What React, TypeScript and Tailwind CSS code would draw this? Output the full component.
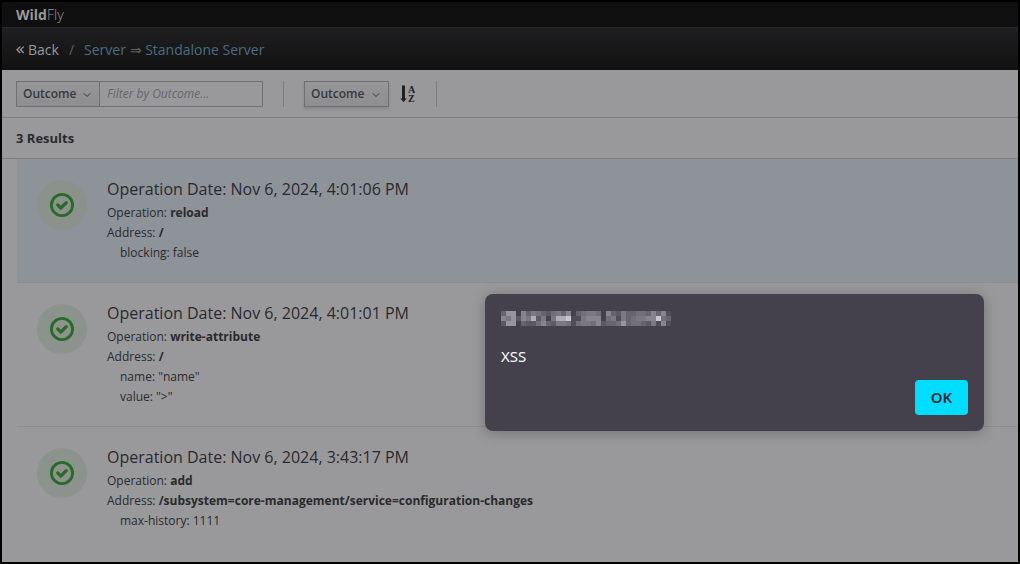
import { ChevronDown } from "lucide-react";

interface IOperation {
  date: string;
  operation: string;
  address: string;
  params: string[];
  selected?: boolean;
}

const operations: IOperation[] = [
  {
    date: "Nov 6, 2024, 4:01:06 PM",
    operation: "reload",
    address: "/",
    params: ["blocking: false"],
    selected: true,
  },
  {
    date: "Nov 6, 2024, 4:01:01 PM",
    operation: "write-attribute",
    address: "/",
    params: ['name: "name"', 'value: ">"'],
  },
  {
    date: "Nov 6, 2024, 3:43:17 PM",
    operation: "add",
    address: "/subsystem=core-management/service=configuration-changes",
    params: ["max-history: 1111"],
  },
];

// brightness of each tile, 0 (background) to 9, row by row
const tiles = [
  "3770635432453603455406325334436361",
  "6572658250588911566604515345566943",
  "2770322463255414554623347344325161",
];

const tileColors = [
  "#44414d", "#4f4d58", "#5b5964", "#66646f", "#71707a",
  "#7a7982", "#86858f", "#96959f", "#aeadb5", "#c8c7cd",
];

const Hidden = () => (
  <svg width="170" height="15" shapeRendering="crispEdges" aria-hidden="true">
    {tiles.map((row, y) =>
      row.split("").map((v, x) => (
        <rect
          key={`${x}-${y}`}
          x={x * 5}
          y={y * 5}
          width="5"
          height="5"
          fill={tileColors[Number(v)]}
        />
      ))
    )}
  </svg>
);

const OkIcon = () => (
  <svg width="24" height="24" viewBox="0 0 24 24" fill="none" stroke="#286a28">
    <circle cx="12" cy="12" r="10.6" strokeWidth="2.8" />
    <path
      d="M7.7 11.9 10.8 15 16.3 9.6"
      strokeWidth="3.2"
      strokeLinecap="round"
      strokeLinejoin="round"
    />
  </svg>
);

const BackIcon = () => (
  <svg width="12" height="14" viewBox="0 0 12 14" fill="none" stroke="currentColor">
    <path d="M4.200 4.600 1 7.800 4.200 11M7.700 4.600 4.500 7.800 7.700 11" strokeWidth="1.3" />
  </svg>
);

const SortIcon = () => (
  <svg width="16" height="20" viewBox="0 0 16 20" fill="#202023">
    <path d="M2 1.500h3v13h1.800L3.500 18 .2 14.500h1.800z" />
    <text x="8" y="9" className="font-['Liberation_Serif',serif] text-[10px] font-bold">
      A
    </text>
    <text x="8" y="18" className="font-['Liberation_Serif',serif] text-[10px] font-bold">
      Z
    </text>
  </svg>
);

const Dropdown = ({ label, className }: { label: string; className: string }) => (
  <div className="relative flex">
    <select
      aria-label={label}
      className={`h-[26px] appearance-none border border-[#707072] bg-linear-to-b from-[#969698] to-[#8e8e90] pl-[6px] text-[12px] font-semibold text-[#38383c] ${className}`}
    >
      <option>Outcome</option>
    </select>
    <ChevronDown
      size={12}
      className="pointer-events-none absolute top-[8px] right-[7px] text-[#38383c]"
    />
  </div>
);

const OperationRow = ({ item }: { item: IOperation }) => (
  <li
    className={`flex gap-5 border-b border-[#8d8d8f] px-5 pt-[21px] pb-[19px] last:border-b-0 ${
      item.selected ? "bg-[#8e9299]" : ""
    }`}
  >
    <div
      className={`flex size-[50px] shrink-0 items-center justify-center rounded-full ${
        item.selected ? "bg-[#8b918b]" : "bg-[#8c928c]"
      }`}
    >
      <OkIcon />
    </div>
    <div className="text-[12px] leading-[20px]">
      <h2 className="pb-[5px] text-[16px] leading-[18px]">
        Operation Date: {item.date}
      </h2>
      <p>
        Operation: <b>{item.operation}</b>
      </p>
      <p>
        Address: <b>{item.address}</b>
      </p>
      <ul className="pl-[13px]">
        {item.params.map((param) => (
          <li key={param}>{param}</li>
        ))}
      </ul>
    </div>
  </li>
);

const App = () => {
  return (
    <div className="relative min-h-screen border-2 border-black bg-[#99999b] font-['Open_Sans',sans-serif] text-[#2a2a2d]">
      <header className="text-[#98989a]">
        <div className="h-[25px] bg-[#0f0f10] px-[14px] text-[14px] leading-[26px]">
          <span className="font-bold">Wild</span>
          <span className="font-light">Fly</span>
        </div>
        <nav className="flex h-[43px] items-center border-t border-[#28282a] bg-linear-to-b from-[#1f1f21] to-[#111112] px-[14px] text-[14px]">
          <a href="#back" className="flex items-center">
            <BackIcon />
            Back
          </a>
          <span className="px-[10px] text-[#606062]">/</span>
          <a href="#server" className="text-[#4b6b80]">
            Server <span className="text-[#606062]">⇒</span> Standalone Server
          </a>
        </nav>
      </header>

      <div className="flex h-[48px] items-center border-b border-[#7e7e80] px-[14px]">
        <div className="flex">
          <Dropdown label="Filter attribute" className="w-[84px]" />
          <input
            type="text"
            aria-label="Filter by Outcome"
            placeholder="Filter by Outcome..."
            className="-ml-px h-[26px] w-[164px] border border-[#707072] px-[7px] text-[12px] placeholder:text-[#66666a] placeholder:italic"
          />
        </div>
        <div className="mx-5 h-[26px] w-px bg-[#7e7e80]" />
        <Dropdown
          label="Sort attribute"
          className="w-[85px] shadow-[0_2px_3px_#00000020]"
        />
        <button type="button" aria-label="Sort ascending" className="ml-[11px]">
          <SortIcon />
        </button>
        <div className="mx-5 h-[26px] w-px bg-[#7e7e80]" />
      </div>

      <h1 className="border-b border-[#7e7e80] px-[14px] text-[13px] leading-[40px] font-bold">
        3 Results
      </h1>

      <ul className="pl-[15px]">
        {operations.map((item) => (
          <OperationRow key={item.date} item={item} />
        ))}
      </ul>

      <div
        role="alertdialog"
        aria-label="XSS"
        className="absolute top-[292px] right-[34px] flex w-[499px] flex-col rounded-lg bg-[#44414d] px-4 pt-[17px] pb-4 font-['Noto_Sans',sans-serif] text-[15px] text-[#fbfbfe] shadow-[0_2px_14px_#00000040]"
      >
        <Hidden />
        <p className="pt-[18px] leading-[24px]">XSS</p>
        <button
          type="button"
          className="mt-3 h-[35px] w-[53px] self-end rounded-sm bg-[#00ddff] font-semibold text-[#2b2a33]"
        >
          OK
        </button>
      </div>
    </div>
  );
};

export default App;
